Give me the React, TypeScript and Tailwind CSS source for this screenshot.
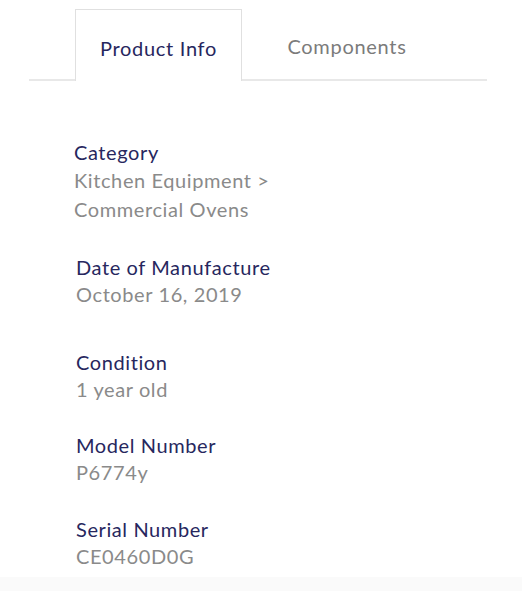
export default function App() {
  const rows = [
    { label: 'Category', value: ['Kitchen Equipment >', 'Commercial Ovens'], cls: 'mt-[57px] ml-[74px]', vl: 'leading-[29px]' },
    { label: 'Date of Manufacture', value: ['October 16, 2019'], cls: 'mt-[29px] ml-[76px]', vl: 'leading-[27px]' },
    { label: 'Condition', value: ['1 year old'], cls: 'mt-[40px] ml-[76px]', vl: 'leading-[27px]' },
    { label: 'Model Number', value: ['P6774y'], cls: 'mt-[28px] ml-[76px]', vl: 'leading-[27px]' },
    { label: 'Serial Number', value: ['CE0460D0G'], cls: 'mt-[29px] ml-[76px]', vl: 'leading-[27px]' },
  ]

  return (
    <div className="w-[522px] h-[591px] bg-white flex flex-col overflow-hidden" style={{ fontFamily: 'Lato, "Noto Sans", sans-serif' }}>
      <div className="mt-[9px] mx-[29px] w-[458px] h-[72px] flex items-stretch border-b-2 border-[#e8e8e8]">
        <div className="ml-[46px] w-[167px] h-[72px] bg-white border border-b-0 border-[#e0e0e0] flex items-center justify-center pt-[4px] text-[20px] tracking-[0.7px] text-[#27275e]">
          Product Info
        </div>
        <div className="w-[210px] flex items-center justify-center pt-[4px] text-[20px] tracking-[0.7px] text-[#7b7b7b]">
          Components
        </div>
      </div>

      <div className="flex-1 flex flex-col">
        {rows.map((r) => (
          <div key={r.label} className={r.cls}>
            <div className="text-[20px] leading-[28px] tracking-[0.6px] text-[#27275e]">{r.label}</div>
            {r.value.map((v) => (
              <div key={v} className={`text-[20px] tracking-[0.6px] text-[#8a8a8a] ${r.vl}`}>{v}</div>
            ))}
          </div>
        ))}
      </div>
      <div className="h-[14px] bg-[#fafafa]" />
    </div>
  )
}
